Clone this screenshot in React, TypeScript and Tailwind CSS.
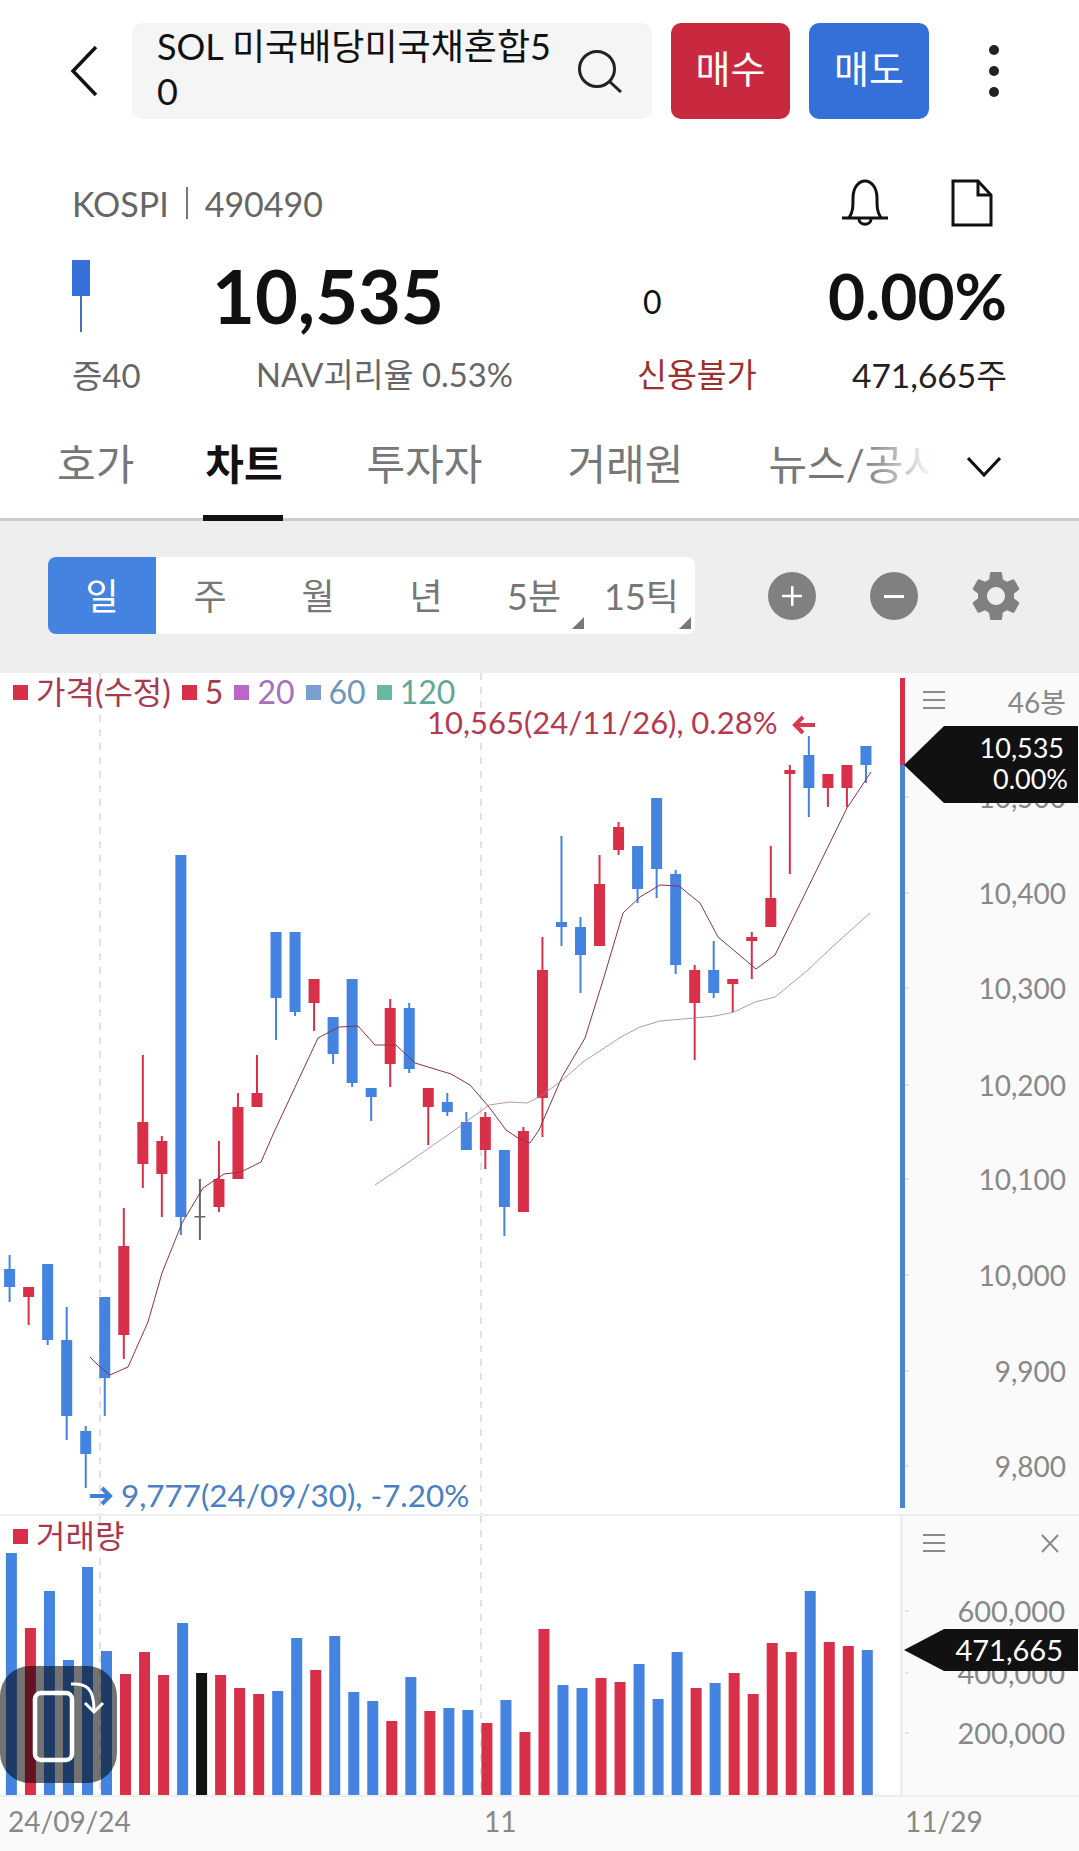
import React from 'react';
import { MdSettings } from 'react-icons/md';

const FONT = 'Lato, "Noto Sans CJK KR", sans-serif';
const RED = '#d9304a';
const BLUE = '#4483e0';
const BLACK = '#111111';

// type, wick top, body top, body bottom, wick bottom
const CANDLES: [string, number, number, number, number][] = [
  ['b', 1255, 1269, 1287, 1302],
  ['r', 1287, 1287, 1297, 1325],
  ['b', 1264, 1264, 1340, 1345],
  ['b', 1307, 1340, 1416, 1440],
  ['b', 1426, 1431, 1454, 1488],
  ['b', 1297, 1297, 1378, 1416],
  ['r', 1208, 1246, 1335, 1359],
  ['r', 1055, 1122, 1164, 1188],
  ['r', 1136, 1141, 1174, 1217],
  ['b', 855, 855, 1217, 1235],
  ['k', 1179, 1216, 1217, 1240],
  ['r', 1141, 1179, 1207, 1212],
  ['r', 1093, 1107, 1179, 1179],
  ['r', 1055, 1093, 1107, 1107],
  ['b', 932, 932, 998, 1040],
  ['b', 932, 932, 1012, 1016],
  ['r', 979, 979, 1003, 1031],
  ['b', 1017, 1017, 1054, 1064],
  ['b', 979, 979, 1083, 1087],
  ['b', 1088, 1088, 1097, 1121],
  ['r', 999, 1008, 1064, 1087],
  ['b', 1003, 1008, 1069, 1073],
  ['r', 1088, 1088, 1107, 1145],
  ['b', 1093, 1102, 1112, 1116],
  ['b', 1112, 1122, 1150, 1150],
  ['r', 1112, 1117, 1150, 1169],
  ['b', 1150, 1150, 1207, 1236],
  ['r', 1127, 1131, 1212, 1212],
  ['r', 937, 970, 1098, 1137],
  ['b', 836, 922, 927, 946],
  ['b', 917, 927, 955, 993],
  ['r', 855, 884, 946, 946],
  ['r', 822, 827, 850, 855],
  ['b', 846, 846, 889, 903],
  ['b', 798, 798, 869, 898],
  ['b', 870, 874, 965, 974],
  ['r', 965, 970, 1003, 1060],
  ['b', 941, 970, 993, 998],
  ['r', 979, 979, 984, 1012],
  ['r', 932, 937, 941, 979],
  ['r', 846, 898, 927, 927],
  ['r', 765, 770, 774, 874],
  ['b', 736, 755, 788, 817],
  ['r', 774, 774, 788, 807],
  ['r', 765, 765, 788, 807],
  ['b', 746, 746, 765, 783],
];

const VOLUMES = [
  1553, 1628, 1591, 1660, 1567, 1651, 1674, 1652, 1675, 1623, 1673, 1675, 1688, 1694, 1691, 1638,
  1670, 1636, 1692, 1701, 1721, 1677, 1711, 1708, 1710, 1723, 1700, 1732, 1629, 1685, 1688, 1678,
  1682, 1664, 1699, 1652, 1688, 1683, 1673, 1694, 1643, 1652, 1591, 1642, 1646, 1650,
];

const MA5 =
  '90,1357 99,1366 110,1375 128,1367 148,1322 162,1273 182,1223 203,1188 224,1174 241,1172 261,1162 275,1130 318,1038 339,1027 358,1026 375,1045 396,1045 415,1063 451,1074 470,1085 489,1107 506,1130 518,1138 530,1143 539,1130 562,1077 585,1038 604,977 623,913 640,897 660,885 679,886 700,903 718,937 756,969 775,955 847,808 871,772';
const MA20 =
  '375,1185 393,1173 429,1148 455,1130 489,1105 510,1102 527,1103 539,1097 560,1082 583,1062 621,1037 640,1027 660,1021 694,1018 715,1016 734,1012 755,1002 775,997 808,970 831,948 870,913';

const PRICE_TICKS: [string, number][] = [
  ['10,500', 797],
  ['10,400', 893],
  ['10,300', 988],
  ['10,200', 1085],
  ['10,100', 1179],
  ['10,000', 1275],
  ['9,900', 1371],
  ['9,800', 1466],
];

const VOLUME_TICKS: [string, number][] = [
  ['600,000', 1611],
  ['400,000', 1673],
  ['200,000', 1733],
];

const candleColor = (t: string) => (t === 'r' ? RED : t === 'b' ? BLUE : BLACK);
const candleX = (i: number) => 9.6 + 19.03 * i;
const volumeX = (i: number) => 11.4 + 19.02 * i;

const Hamburger = ({ y }: { y: number }) => (
  <g stroke="#8a8a8a" strokeWidth="2">
    <line x1="923" x2="945" y1={y} y2={y} />
    <line x1="923" x2="945" y1={y + 8} y2={y + 8} />
    <line x1="923" x2="945" y1={y + 16} y2={y + 16} />
  </g>
);

const LegendItem = ({ box, color, label }: { box: string; color: string; label: string }) => (
  <span className="flex items-center gap-[8px]">
    <span className="h-[15px] w-[15px]" style={{ backgroundColor: box }} />
    <span style={{ color }}>{label}</span>
  </span>
);

export default function App() {
  return (
    <div className="relative h-[1851px] w-[1079px] overflow-hidden bg-white" style={{ fontFamily: FONT }}>
      {/* top bar */}
      <div className="flex h-[119px] items-end pl-[70px]">
        <div className="flex h-[96px] w-[62px] items-center">
          <svg width="28" height="52" viewBox="0 0 28 52" fill="none">
            <path d="M26 2 L3 26 L26 50" stroke="#111" strokeWidth="3.5" />
          </svg>
        </div>
        <div className="flex h-[96px] w-[520px] items-center rounded-[10px] bg-[#f5f5f5] pl-[25px]">
          <div className="w-[405px] break-all pb-[4px] text-[36px] leading-[45px] text-[#111]">SOL 미국배당미국채혼합50</div>
          <svg className="ml-[14px]" width="46" height="44" viewBox="0 0 46 44" fill="none">
            <circle cx="21" cy="20" r="17.5" stroke="#222" strokeWidth="3" />
            <line x1="33" y1="32" x2="45" y2="43" stroke="#222" strokeWidth="3" />
          </svg>
        </div>
        <button className="ml-[19px] h-[96px] w-[119px] rounded-[10px] bg-[#c9293f] pb-[5px] text-[38px] text-white">매수</button>
        <button className="ml-[19px] h-[96px] w-[120px] rounded-[10px] bg-[#3470d8] pb-[5px] text-[38px] text-white">매도</button>
        <div className="ml-[60px] flex h-[96px] flex-col items-center justify-center gap-[11px]">
          <span className="h-[10px] w-[10px] rounded-full bg-[#222]" />
          <span className="h-[10px] w-[10px] rounded-full bg-[#222]" />
          <span className="h-[10px] w-[10px] rounded-full bg-[#222]" />
        </div>
      </div>

      {/* code row */}
      <div className="mt-[60px] flex h-[48px] items-center pl-[72px] pr-[86px] text-[34px] text-[#666]">
        <span>KOSPI</span>
        <span className="ml-[17px] mr-[17px] h-[32px] w-[2px] bg-[#777]" />
        <span>490490</span>
        <svg className="ml-auto" width="48" height="48" viewBox="0 0 48 48" fill="none">
          <path d="M8 39 C12 33 12 28 12 19 C12 8 18 2 24 2 C30 2 36 8 36 19 C36 28 36 33 40 39" stroke="#111" strokeWidth="3" />
          <line x1="1" y1="39" x2="47" y2="39" stroke="#111" strokeWidth="3" />
          <path d="M18 40 C18 47 30 47 30 40" stroke="#111" strokeWidth="3" />
        </svg>
        <svg className="ml-[62px]" width="42" height="48" viewBox="0 0 42 48" fill="none">
          <path d="M2 2 H27 L40 16 V46 H2 Z" stroke="#111" strokeWidth="3" />
          <path d="M27 2 V16 H40" stroke="#111" strokeWidth="3" />
        </svg>
      </div>

      {/* price row */}
      <div className="mt-[33px] flex h-[72px] items-start pl-[72px] pr-[72px]">
        <svg className="w-[140px] shrink-0" height="72" viewBox="0 0 140 72">
          <rect x="0" y="0" width="18" height="36" fill="#3470d8" />
          <rect x="8" y="36" width="2" height="36" fill="#3d73c0" />
        </svg>
        <span className="w-[431px] shrink-0 text-[74px] font-bold leading-[72px] text-[#111]">10,535</span>
        <span className="mt-[22px] text-[32px] leading-[40px] text-[#111]">0</span>
        <span className="mt-[4px] ml-auto text-[64px] font-bold leading-[64px] text-[#111]">0.00%</span>
      </div>

      {/* sub row */}
      <div className="mt-[22px] flex h-[42px] items-center pl-[72px] pr-[72px] text-[33px] leading-[42px]">
        <span className="w-[184px] shrink-0 text-[#666]">증40</span>
        <span className="w-[381px] shrink-0 text-[32.700px] text-[#666]">NAV괴리율 0.53%</span>
        <span className="text-[32.500px] text-[#9c2f2f]">신용불가</span>
        <span className="ml-auto text-[33.500px] text-[#222]">471,665주</span>
      </div>

      {/* tabs */}
      <div className="relative mt-[43px] flex h-[82px] items-start border-b-[3px] border-[#cccccc] text-[42px] leading-[50px] text-[#777]">
        <span className="ml-[57px]">호가</span>
        <span className="relative ml-[71px] h-[79px] font-bold text-[#111]">
          차트
          <span className="absolute bottom-[-3px] left-[-2px] right-0 h-[6px] bg-[#111]" />
        </span>
        <span className="ml-[84px]">투자자</span>
        <span className="ml-[85px]">거래원</span>
        <span className="ml-[85px]">뉴스/공시</span>
        <div className="absolute left-[860px] top-0 h-[60px] w-[75px] bg-gradient-to-r from-white/0 to-white" />
        <div className="absolute left-[935px] top-0 h-[60px] w-[144px] bg-white" />
        <svg className="absolute left-[967px] top-[18px]" width="34" height="20" viewBox="0 0 34 20" fill="none">
          <path d="M1 1 L17 18 L33 1" stroke="#111" strokeWidth="3" />
        </svg>
      </div>

      {/* toolbar */}
      <div className="flex h-[152px] items-start bg-[#eeeeee] pl-[48px] pt-[36px]">
        <div className="flex h-[77px] w-[647px] overflow-hidden rounded-[8px] bg-white text-[36px] text-[#777]">
          <span className="flex w-[108px] items-center justify-center bg-[#4483e0] text-white">일</span>
          <span className="flex w-[108px] items-center justify-center">주</span>
          <span className="flex w-[108px] items-center justify-center">월</span>
          <span className="flex w-[108px] items-center justify-center">년</span>
          <span className="relative flex w-[108px] items-center justify-center">
            5분
            <span className="absolute bottom-[5px] right-[4px] h-0 w-0 border-b-[12px] border-l-[12px] border-b-[#777] border-l-transparent" />
          </span>
          <span className="relative flex w-[107px] items-center justify-center">
            15틱
            <span className="absolute bottom-[5px] right-[4px] h-0 w-0 border-b-[12px] border-l-[12px] border-b-[#777] border-l-transparent" />
          </span>
        </div>
        <div className="ml-[73px] mt-[15px] flex h-[48px] w-[48px] items-center justify-center rounded-full bg-[#808080]">
          <svg width="24" height="24" viewBox="0 0 24 24">
            <path d="M11 2h2.5v8.7H22v2.6h-8.500V22H11v-8.700H2v-2.600h9z" fill="white" />
          </svg>
        </div>
        <div className="ml-[54px] mt-[15px] flex h-[48px] w-[48px] items-center justify-center rounded-full bg-[#808080]">
          <span className="h-[3px] w-[20px] bg-white" />
        </div>
        <MdSettings className="ml-[48px] mt-[9px] text-[#808080]" size={60} />
      </div>

      {/* price panel */}
      <div className="flex h-[843px] border-b-2 border-[#eeeeee]">
        <div className="relative w-[900px]">
          <div className="absolute left-[13px] top-[1px] z-10 flex items-center gap-[11px] text-[32px] leading-[36px]">
            <LegendItem box={RED} color="#a83a50" label="가격(수정)" />
            <LegendItem box={RED} color="#a83a50" label="5" />
            <LegendItem box="#bb66c8" color="#a86fb8" label="20" />
            <LegendItem box="#78a0cd" color="#6f97ba" label="60" />
            <LegendItem box="#66b8a0" color="#5fa896" label="120" />
          </div>
          <svg width="900" height="841" viewBox="0 673 900 841" style={{ fontFamily: FONT }}>
            <line x1="100" x2="100" y1="673" y2="1514" stroke="#e2e2e2" strokeWidth="2" strokeDasharray="7 7" />
            <line x1="481" x2="481" y1="673" y2="1514" stroke="#e2e2e2" strokeWidth="2" strokeDasharray="7 7" />
            {CANDLES.map(([t, wt, bt, bb, wb], i) => (
              <g key={i} fill={t === 'k' ? '#666666' : candleColor(t)}>
                <rect x={candleX(i) - 1} y={wt} width="2" height={wb - wt} />
                <rect x={candleX(i) - 5.500} y={bt} width="11" height={Math.max(bb - bt, 1.500)} />
              </g>
            ))}
            <polyline points={MA5} fill="none" stroke="#8a3348" strokeWidth="1" />
            <polyline points={MA20} fill="none" stroke="#a878a8" strokeWidth="0.800" />
            <text x="427" y="722" fontSize="31" fill="#b8384f" dominantBaseline="central">10,565(24/11/26), 0.28%</text>
            <path d="M795 725 L815 725 M803 717 L795 725 L803 733" fill="none" stroke="#d83a50" strokeWidth="4" />
            <path d="M90 1496 L110 1496 M102 1488 L110 1496 L102 1504" fill="none" stroke="#3f7fd6" strokeWidth="4" />
            <text x="121" y="1495" fontSize="31.400" fill="#4a80c4" dominantBaseline="central">9,777(24/09/30), -7.20%</text>
          </svg>
        </div>
        <svg className="flex-1 bg-[#fafafa]" width="179" height="841" viewBox="900 673 179 841" style={{ fontFamily: FONT }}>
          <rect x="900" y="678" width="5" height="87" fill="#d9304a" />
          <rect x="900" y="765" width="5" height="743" fill="#4a86d0" />
          <Hamburger y={692} />
          <text x="1066" y="702" fontSize="28" fill="#888" textAnchor="end" dominantBaseline="central">46봉</text>
          {PRICE_TICKS.map(([label, y]) => (
            <g key={label}>
              <line x1="905" x2="909" y1={y} y2={y} stroke="#e5e5e5" strokeWidth="2" />
              <text x="1066" y={y} fontSize="28" fill="#888" textAnchor="end" dominantBaseline="central">{label}</text>
            </g>
          ))}
          <polygon points="904,765 944,726 1078,726 1078,803 944,803" fill={BLACK} />
          <text x="1064" y="747" fontSize="27" fill="#fff" textAnchor="end" dominantBaseline="central">10,535</text>
          <text x="1068" y="778" fontSize="27" fill="#fff" textAnchor="end" dominantBaseline="central">0.00%</text>
        </svg>
      </div>

      {/* volume panel */}
      <div className="flex h-[281px] border-b-2 border-[#eeeeee]">
        <div className="relative w-[900px]">
          <div className="absolute left-[13px] top-[2px] z-10 text-[32px] leading-[36px]">
            <LegendItem box={RED} color="#a83a50" label="거래량" />
          </div>
          <svg width="900" height="279" viewBox="0 1516 900 279">
            <line x1="100" x2="100" y1="1516" y2="1795" stroke="#e2e2e2" strokeWidth="2" strokeDasharray="7 7" />
            <line x1="481" x2="481" y1="1516" y2="1795" stroke="#e2e2e2" strokeWidth="2" strokeDasharray="7 7" />
            {VOLUMES.map((top, i) => (
              <rect key={i} x={volumeX(i) - 5.500} y={top} width="11" height={1795 - top} fill={candleColor(CANDLES[i][0])} />
            ))}
          </svg>
          <div className="absolute left-0 top-[150px] z-20 flex h-[117px] w-[117px] items-center justify-center rounded-[30px] bg-black/55">
            <svg width="117" height="117" viewBox="0 0 117 117" fill="none">
              <rect x="35" y="27" width="37" height="67" rx="6" stroke="white" strokeWidth="4.500" />
              <path d="M71 18 C86 17 94 22 94 44" stroke="white" strokeWidth="3" />
              <path d="M85 37 L94 46 L103 37" stroke="white" strokeWidth="3" />
            </svg>
          </div>
        </div>
        <svg className="flex-1 bg-[#fafafa]" width="179" height="279" viewBox="900 1516 179 279" style={{ fontFamily: FONT }}>
          <rect x="900" y="1516" width="3" height="279" fill="#eeeeee" />
          <Hamburger y={1535} />
          <path d="M1042 1535 L1058 1552 M1058 1535 L1042 1552" stroke="#8a8a8a" strokeWidth="2" />
          {VOLUME_TICKS.map(([label, y]) => (
            <g key={label}>
              <line x1="905" x2="909" y1={y} y2={y} stroke="#e5e5e5" strokeWidth="2" />
              <text x="1065" y={y - 1} fontSize="29" fill="#888" textAnchor="end" dominantBaseline="central">{label}</text>
            </g>
          ))}
          <polygon points="904,1650 944,1629 1078,1629 1078,1671 944,1671" fill={BLACK} />
          <text x="1063" y="1649" fontSize="29" fill="#fff" textAnchor="end" dominantBaseline="central">471,665</text>
        </svg>
      </div>

      {/* date axis */}
      <div className="relative flex h-[54px] items-center bg-[#fafafa] pb-[6px] text-[28px] text-[#888]">
        <span className="ml-[8px]">24/09/24</span>
        <span className="absolute left-[484px]">11</span>
        <span className="absolute left-[905px]">11/29</span>
      </div>
    </div>
  );
}
